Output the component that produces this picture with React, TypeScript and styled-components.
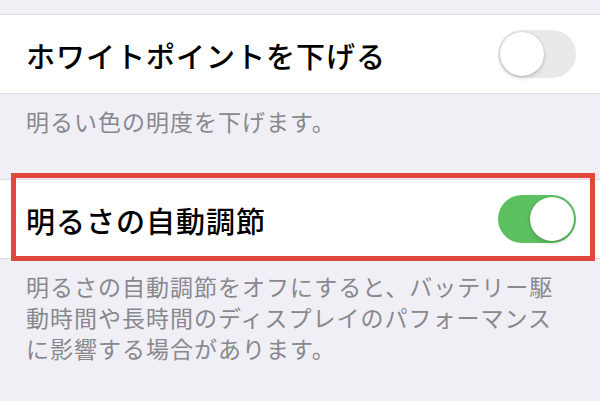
import styled, { createGlobalStyle } from 'styled-components';

const GlobalStyle = createGlobalStyle`
    html, body {
        margin: 0;
        padding: 0;
        background: #f0eff5;
    }
    body {
        font-family: 'Noto Sans CJK JP', 'Noto Sans', sans-serif;
        -webkit-font-smoothing: antialiased;
    }
`;

const Page = styled.div`
    width: 600px;
    height: 401px;
    overflow: hidden;
    background: #f0eff5;
    padding-top: 14px;
    box-sizing: border-box;
`;

const Row = styled.div<{ $highlighted?: boolean }>`
    position: relative;
    height: 80px;
    box-sizing: border-box;
    background: #ffffff;
    border-top: 1px solid #dddce1;
    border-bottom: 1px solid #dddce1;
    display: flex;
    align-items: center;
    justify-content: space-between;
    padding: 0 24px 0 26px;

    ${({ $highlighted }) =>
        $highlighted &&
        `
        &::after {
            content: '';
            position: absolute;
            left: 11px;
            right: 5px;
            top: -7px;
            bottom: -3px;
            border: 5px solid #e0483c;
            pointer-events: none;
        }
    `}
`;

const Title = styled.span`
    font-size: 29px;
    font-weight: 500;
    letter-spacing: 1px;
    color: #000000;
    line-height: 1;
    margin-top: 2px;
`;

const Caption = styled.p`
    margin: 0;
    padding: 12px 26px 0 26px;
    font-size: 23px;
    letter-spacing: 1px;
    line-height: 31px;
    color: #88888d;
`;

const Track = styled.span<{ $on: boolean }>`
    position: relative;
    width: 78px;
    height: 48px;
    border-radius: 24px;
    flex-shrink: 0;
    box-sizing: border-box;
    background: ${({ $on }) => ($on ? '#5cbf60' : '#e9e9eb')};
    display: flex;
    align-items: center;
    justify-content: ${({ $on }) => ($on ? 'flex-end' : 'flex-start')};
    padding: 2px;
`;

const Knob = styled.span`
    width: 44px;
    height: 44px;
    border-radius: 50%;
    background: #ffffff;
    box-shadow: 0 2px 4px rgba(0, 0, 0, 0.18), 0 0 0 0.5px rgba(0, 0, 0, 0.08);
`;

const Section = styled.section<{ $gap: number }>`
    margin-top: ${({ $gap }) => $gap}px;
`;

const Toggle = ({ on }: { on: boolean }) => (
    <Track $on={on}>
        <Knob />
    </Track>
);

const App = () => {
    return (
        <Page>
            <GlobalStyle />
            <Section $gap={0}>
                <Row>
                    <Title>ホワイトポイントを下げる</Title>
                    <Toggle on={false} />
                </Row>
                <Caption>明るい色の明度を下げます。</Caption>
            </Section>
            <Section $gap={42}>
                <Row $highlighted>
                    <Title>明るさの自動調節</Title>
                    <Toggle on={true} />
                </Row>
                <Caption>
                    明るさの自動調節をオフにすると、バッテリー駆動時間や長時間のディスプレイのパフォーマンスに影響する場合があります。
                </Caption>
            </Section>
        </Page>
    );
};

export default App;
